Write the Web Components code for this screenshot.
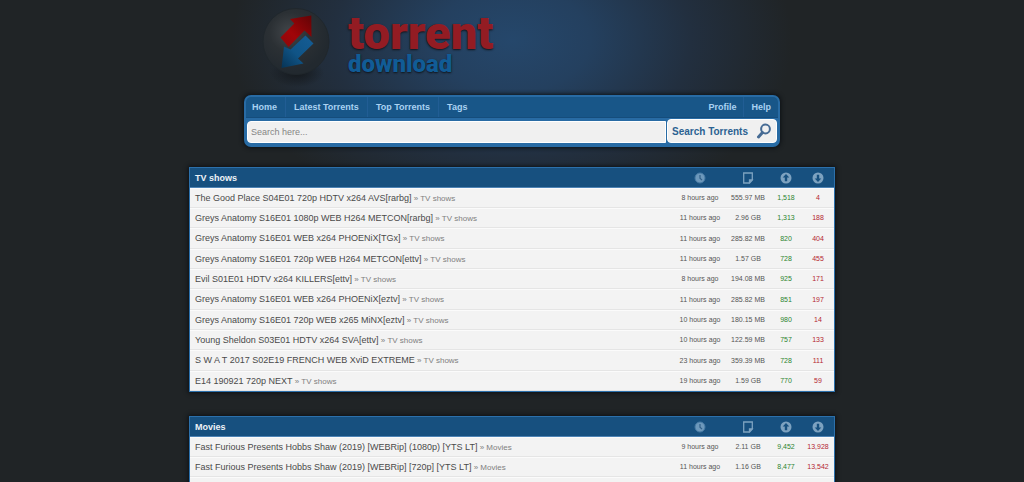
<!DOCTYPE html>
<html lang="en">
<head>
<meta charset="utf-8">
<meta name="viewport" content="width=device-width, initial-scale=1">
<title>Torrent Download</title>
<style>
html { background: #202426; scrollbar-width: none; }
body {
  margin: 0;
  font-family: "Liberation Sans", Arial, sans-serif;
  color: #444;
  background: radial-gradient(ellipse 280px 185px at 50% 40px, #25476b 0%, #24405f 28%, #222f3f 64%, #202426 100%) no-repeat;
}
</style>
</head>
<body>
<torrent-page>
  <site-logo slot="head"></site-logo>
  <nav-bar slot="head">
    <nav-link href="#home">Home</nav-link>
    <nav-link href="#latest">Latest Torrents</nav-link>
    <nav-link href="#top">Top Torrents</nav-link>
    <nav-link href="#tags" last>Tags</nav-link>
    <nav-link slot="end" href="#profile">Profile</nav-link>
    <nav-link slot="end" href="#help" last>Help</nav-link>
    <search-box slot="search"></search-box>
  </nav-bar>
  <torrent-list id="tv" category="TV shows">TV shows</torrent-list>
  <torrent-list id="movies" category="Movies">Movies</torrent-list>
</torrent-page>
<script>
const LISTS = {
  tv: [
    ['The Good Place S04E01 720p HDTV x264 AVS[rarbg]', '8 hours ago', '555.97 MB', '1,518', '4'],
    ['Greys Anatomy S16E01 1080p WEB H264 METCON[rarbg]', '11 hours ago', '2.96 GB', '1,313', '188'],
    ['Greys Anatomy S16E01 WEB x264 PHOENiX[TGx]', '11 hours ago', '285.82 MB', '820', '404'],
    ['Greys Anatomy S16E01 720p WEB H264 METCON[ettv]', '11 hours ago', '1.57 GB', '728', '455'],
    ['Evil S01E01 HDTV x264 KILLERS[ettv]', '8 hours ago', '194.08 MB', '925', '171'],
    ['Greys Anatomy S16E01 WEB x264 PHOENiX[eztv]', '11 hours ago', '285.82 MB', '851', '197'],
    ['Greys Anatomy S16E01 720p WEB x265 MiNX[eztv]', '10 hours ago', '180.15 MB', '980', '14'],
    ['Young Sheldon S03E01 HDTV x264 SVA[ettv]', '10 hours ago', '122.59 MB', '757', '133'],
    ['S W A T 2017 S02E19 FRENCH WEB XviD EXTREME', '23 hours ago', '359.39 MB', '728', '111'],
    ['E14 190921 720p NEXT', '19 hours ago', '1.59 GB', '770', '59']
  ],
  movies: [
    ['Fast Furious Presents Hobbs Shaw (2019) [WEBRip] (1080p) [YTS LT]', '9 hours ago', '2.11 GB', '9,452', '13,928'],
    ['Fast Furious Presents Hobbs Shaw (2019) [WEBRip] [720p] [YTS LT]', '11 hours ago', '1.16 GB', '8,477', '13,542'],
    ['', '', '', '', '']
  ]
};

function define(name, html, setup) {
  const template = document.createElement('template');
  template.innerHTML = html;
  customElements.define(name, class extends HTMLElement {
    constructor() {
      super();
      this.attachShadow({ mode: 'open' }).append(template.content.cloneNode(true));
    }
    connectedCallback() { if (setup) setup(this, this.shadowRoot); }
  });
}

define('torrent-page', `
<style>
:host { display: block; }
header { width: calc(100% - 16px); max-width: 536px; margin: 0 auto 20px; }
main { display: grid; gap: 24px; width: calc(100% - 16px); max-width: 646px; margin: 0 auto; }
</style>
<header><slot name="head"></slot></header>
<main><slot></slot></main>`);

define('site-logo', `
<style>
:host { display: block; padding-top: 5px; }
a { display: flex; gap: 12px; height: 90px; padding-left: 12px; text-decoration: none; }
svg { display: block; flex: none; }
.name { display: grid; align-content: start; padding-top: 3px; font-family: Roboto, sans-serif; font-weight: 900; }
.big { font-size: 47px; line-height: 49px; color: #931c23; text-shadow: 0 1px 2px #10141a; }
.small { font-size: 24px; line-height: 14px; color: #115c96; text-shadow: 0 1px 2px #10141a; }
</style>
<a href="#home">
  <svg width="80" height="84" viewBox="0 0 80 84" aria-hidden="true">
    <defs>
      <radialGradient id="disc" cx=".4" cy=".36" r=".6"><stop offset="0" stop-color="#42464a"/><stop offset=".5" stop-color="#2b3034"/><stop offset="1" stop-color="#22292f"/></radialGradient>
      <radialGradient id="shade"><stop offset="0" stop-color="#15191d"/><stop offset="1" stop-color="#15191d" stop-opacity="0"/></radialGradient>
      <linearGradient id="red" x1="1" y1="0" x2="0" y2="1"><stop offset="0" stop-color="#620406"/><stop offset=".6" stop-color="#a10508"/><stop offset="1" stop-color="#8b080b"/></linearGradient>
      <linearGradient id="blue" x1="1" y1="0" x2="0" y2="1"><stop offset="0" stop-color="#155d96"/><stop offset=".55" stop-color="#105486"/><stop offset="1" stop-color="#073354"/></linearGradient>
    </defs>
    <ellipse cx="41" cy="68" rx="27" ry="14" fill="url(#shade)"/>
    <circle cx="40" cy="36.500" r="33" fill="url(#disc)" stroke="#20272c" stroke-width="1"/>
    <path d="M55.300 10.500 34 14 38.300 18.500 24.500 32.500 32.500 42 48.500 25.500 55.500 32Z" fill="url(#red)"/>
    <path d="M49.500 30.500 57.500 38.500 42 53.500 47.500 58.500 25.500 63 28 41.500 34.500 44.500Z" fill="url(#blue)"/>
  </svg>
  <span class="name"><span class="big">torrent</span><span class="small">download</span></span>
</a>`);

define('nav-bar', `
<style>
:host {
  display: block; box-sizing: border-box; padding: 2px; border-radius: 7px;
  background: #286ba4; box-shadow: 0 0 4px 1px #0d1115;
}
nav { display: flex; height: 21px; box-sizing: border-box; background: #185688; border-radius: 5px 5px 0 0; border-bottom: 1px solid #154d7c; }
.end { display: flex; margin-left: auto; }
</style>
<nav><slot></slot><span class="end"><slot name="end"></slot></span></nav>
<slot name="search"></slot>`);

define('nav-link', `
<style>
:host { display: flex; border-right: 1px solid #215d94; }
:host([last]) { border-right: 0; }
a { padding: 0 8px; font-size: 9px; line-height: 20px; font-weight: bold; color: #aad2f2; text-decoration: none; white-space: nowrap; }
:host(:first-child) a { padding-left: 6px; }
:host([slot="end"]) a { padding: 0 7px; }
</style>
<a><slot></slot></a>`, (el, root) => { root.querySelector('a').href = el.getAttribute('href'); });

define('search-box', `
<style>
:host { display: block; }
form { display: flex; align-items: flex-end; gap: 1px; padding: 1px 1px 2px; }
input {
  flex: 1; min-width: 0; height: 22px; box-sizing: border-box; border: 1px solid #fff; border-radius: 4px 0 0 4px;
  padding: 0 3px; background: #f0f0f0; font: 9px "Liberation Sans", Arial, sans-serif; color: #444; outline: 0;
}
input::placeholder { color: #858585; opacity: 1; }
button {
  display: flex; align-items: center; justify-content: space-between; width: 110px; height: 24px; box-sizing: border-box;
  border: 1px solid #fff; border-radius: 4px; padding: 0 4px; background: #f0f0f0;
  font: bold 10px "Liberation Sans", Arial, sans-serif; color: #2b6292; white-space: nowrap;
}
</style>
<form role="search" onsubmit="return false">
  <input type="text" placeholder="Search here..." aria-label="Search">
  <button type="submit">Search Torrents
    <svg width="16" height="16" viewBox="0 0 16 16" fill="none" stroke="#466b94" aria-hidden="true"><circle cx="9.500" cy="6" r="4.400" stroke-width="2"/><path d="M6.500 9.500 2.500 14" stroke-width="3" stroke-linecap="round"/></svg>
  </button>
</form>`);

define('torrent-list', `
<style>
:host { display: block; box-sizing: border-box; border: 1px solid #2c70ab; box-shadow: 0 0 4px 1px #0d1115; background: #f4f4f4; }
table { width: 100%; table-layout: fixed; border-collapse: separate; border-spacing: 0; }
th, td { padding: 0; height: 20px; box-sizing: border-box; text-align: center; white-space: nowrap; line-height: 16px; }
thead th { background: #17507f; border-bottom: 1px solid #4d83b5; color: #eef3f7; font-size: 9px; }
thead th:first-child { text-align: left; padding-left: 5px; }
th svg { display: block; margin: 0 auto; }
td { background: #f3f3f3; border-top: 1px solid #fbfbfb; border-bottom: 1px solid #e5e5e5; font-size: 7px; color: #555; }
tbody tr:nth-child(3n) td { height: 21px; }
td:first-child { text-align: left; padding-left: 5px; font-size: 8px; color: #808080; overflow: hidden; text-overflow: ellipsis; }
td a { font-size: 9px; color: #4a4a4a; text-decoration: none; }
td a.cat { font-size: 8px; color: #808080; }
td.up { color: #2c842f; }
td.down { color: #b32630; }
.time { width: 52px; } .size { width: 44px; } .count { width: 32px; }
</style>
<table>
  <colgroup><col><col class="time"><col class="size"><col class="count"><col class="count"></colgroup>
  <thead><tr>
    <th scope="col"><slot></slot></th>
    <th scope="col" aria-label="Age"><svg width="12" height="12" viewBox="0 0 12 12"><circle cx="6" cy="6" r="5" fill="#6d98bb" stroke="#467aa5"/><path d="M6 3v3.200l2 2" fill="none" stroke="#315f88" stroke-width="1.200"/></svg></th>
    <th scope="col" aria-label="Size"><svg width="12" height="12" viewBox="0 0 12 12" fill="none" stroke="#7da2c0" stroke-width="1.300"><path d="M1.700 1h8.600v7l-2.800 3H1.700z"/><path d="M10 8H7.500v2.500z" fill="#7da2c0"/></svg></th>
    <th scope="col" aria-label="Seeds"><svg width="12" height="12" viewBox="0 0 12 12"><circle cx="6" cy="6" r="5.500" fill="#7da2c0"/><path d="M6 2 9.300 5.600H7.200V9.200H4.800V5.600H2.700z" fill="#17507f"/></svg></th>
    <th scope="col" aria-label="Peers"><svg width="12" height="12" viewBox="0 0 12 12"><circle cx="6" cy="6" r="5.500" fill="#7da2c0"/><path d="M6 10 2.700 6.400H4.800V2.800H7.200V6.400H9.300z" fill="#17507f"/></svg></th>
  </tr></thead>
  <tbody></tbody>
</table>`, (el, root) => {
  const body = root.querySelector('tbody');
  const category = el.getAttribute('category');
  for (const [title, age, size, up, down] of LISTS[el.id]) {
    const row = body.insertRow();
    const cell = row.insertCell();
    if (title) {
      const link = document.createElement('a');
      link.href = '#torrent';
      link.textContent = title;
      const cat = document.createElement('a');
      cat.className = 'cat';
      cat.href = '#' + el.id;
      cat.textContent = category;
      cell.append(link, ' » ', cat);
    }
    [age, size, up, down].forEach((value, i) => {
      const c = row.insertCell();
      c.textContent = value;
      c.className = ['age', 'size', 'up', 'down'][i];
    });
  }
});
</script>
</body>
</html>
